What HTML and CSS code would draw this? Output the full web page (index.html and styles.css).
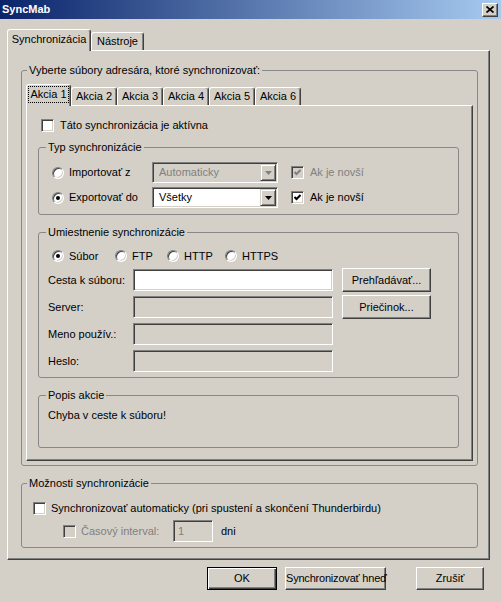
FILE: index.html
```html
<!DOCTYPE html>
<html lang="sk">
<head>
    <meta charset="UTF-8">
    <title>SyncMab</title>
    <link rel="stylesheet" href="styles.css">
</head>
<body>
<div class="window">
    <!-- title bar -->
    <div class="titlebar">
        <span class="title">SyncMab</span>
        <span class="close-btn">
            <svg width="8" height="7" viewBox="0 0 8 7"><path d="M0.5 0.5 L7.5 6.5 M7.5 0.5 L0.5 6.5" stroke="#000" stroke-width="1.7"/></svg>
        </span>
    </div>

    <div class="main">
        <div class="tabs outer-tabs">
            <div class="tab active">Synchronizácia</div>
            <div class="tab">Nástroje</div>
        </div>

        <div class="panel outer-panel">
            <fieldset class="group files-group">
                <legend>Vyberte súbory adresára, ktoré synchronizovať:</legend>

                <div class="tabs inner-tabs">
                    <div class="tab active"><span class="focus">Akcia 1</span></div>
                    <div class="tab">Akcia 2</div>
                    <div class="tab">Akcia 3</div>
                    <div class="tab">Akcia 4</div>
                    <div class="tab">Akcia 5</div>
                    <div class="tab">Akcia 6</div>
                </div>

                <div class="panel inner-panel">
                    <div class="check-row active-row">
                        <span class="check"></span>
                        <span>Táto synchronizácia je aktívna</span>
                    </div>

                    <!-- typ -->
                    <fieldset class="group sub-group type-group">
                        <legend>Typ synchronizácie</legend>
                        <div class="type-row">
                            <span class="radio-label"><span class="radio"></span>Importovať z</span>
                            <div class="combo disabled">
                                <span class="combo-text">Automaticky</span>
                                <span class="drop"><svg width="7" height="4" viewBox="0 0 7 4"><polygon points="0,0 7,0 3.5,4"/></svg></span>
                            </div>
                            <span class="check-label disabled">
                                <span class="check checked"><svg width="7" height="7" viewBox="0 0 7 7"><polyline points="0.5,3 2.5,5 6.5,1" fill="none" stroke-width="2"/></svg></span>
                                Ak je novší
                            </span>
                        </div>
                        <div class="type-row">
                            <span class="radio-label"><span class="radio on"></span>Exportovať do</span>
                            <div class="combo">
                                <span class="combo-text">Všetky</span>
                                <span class="drop"><svg width="7" height="4" viewBox="0 0 7 4"><polygon points="0,0 7,0 3.5,4"/></svg></span>
                            </div>
                            <span class="check-label">
                                <span class="check checked"><svg width="7" height="7" viewBox="0 0 7 7"><polyline points="0.5,3 2.5,5 6.5,1" fill="none" stroke-width="2"/></svg></span>
                                Ak je novší
                            </span>
                        </div>
                    </fieldset>

                    <!-- umiestnenie -->
                    <fieldset class="group sub-group loc-group">
                        <legend>Umiestnenie synchronizácie</legend>
                        <div class="radio-row">
                            <span class="radio-item w-subor"><span class="radio on"></span>Súbor</span>
                            <span class="radio-item w-ftp"><span class="radio"></span>FTP</span>
                            <span class="radio-item w-http"><span class="radio"></span>HTTP</span>
                            <span class="radio-item"><span class="radio"></span>HTTPS</span>
                        </div>
                        <div class="field-row">
                            <span class="field-label">Cesta k súboru:</span>
                            <input class="field" type="text">
                            <button class="btn side-btn">Prehľadávať...</button>
                        </div>
                        <div class="field-row">
                            <span class="field-label">Server:</span>
                            <input class="field" type="text" disabled>
                            <button class="btn side-btn">Priečinok...</button>
                        </div>
                        <div class="field-row">
                            <span class="field-label">Meno použív.:</span>
                            <input class="field" type="text" disabled>
                        </div>
                        <div class="field-row">
                            <span class="field-label">Heslo:</span>
                            <input class="field" type="password" disabled>
                        </div>
                    </fieldset>

                    <!-- popis -->
                    <fieldset class="group sub-group desc-group">
                        <legend>Popis akcie</legend>
                        <div class="desc-text">Chyba v ceste k súboru!</div>
                    </fieldset>
                </div>
            </fieldset>

            <fieldset class="group options-group">
                <legend>Možnosti synchronizácie</legend>
                <div class="check-row auto-row">
                    <span class="check"></span>
                    <span>Synchronizovať automaticky (pri spustení a skončení Thunderbirdu)</span>
                </div>
                <div class="interval-row">
                    <span class="check disabled"></span>
                    <span class="interval-label">Časový interval:</span>
                    <input class="field interval-field" type="text" value="1" disabled>
                    <span class="unit">dni</span>
                </div>
            </fieldset>
        </div>
    </div>

    <!-- dialog buttons -->
    <div class="dialog-buttons">
        <button class="btn default ok-btn">OK</button>
        <button class="btn sync-btn">Synchronizovať hneď</button>
        <button class="btn cancel-btn">Zrušiť</button>
    </div>
</div>
</body>
</html>
```

FILE: styles.css
```css
* {
    box-sizing: border-box;
}

body {
    margin: 0;
    background-color: #d4d0c8;
    font-family: "Liberation Sans", Arial, sans-serif;
    font-size: 11px;
    line-height: 13px;
    color: #000;
}

.window {
    width: 501px;
    height: 602px;
    overflow: hidden;
}

/* title bar */
.titlebar {
    height: 19px;
    background: linear-gradient(to right, #0a246a, #a6caf0);
    display: flex;
    align-items: center;
    justify-content: space-between;
    padding: 0 3px 0 2px;
}

.title {
    color: #fff;
    font-weight: bold;
}

.close-btn {
    width: 16px;
    height: 14px;
    background-color: #d4d0c8;
    border: 1px solid;
    border-color: #fff #404040 #404040 #fff;
    box-shadow: inset -1px -1px #808080;
    display: flex;
    align-items: center;
    justify-content: center;
}

.main {
    padding: 10px 0 0 7px;
}

/* tabs */
.tabs {
    display: flex;
    align-items: flex-end;
    height: 21px;
}

.tab {
    height: 18px;
    border: 1px solid;
    border-bottom: 0;
    border-color: #fff #404040 #404040 #fff;
    box-shadow: inset -1px 0 #808080;
    border-radius: 3px 3px 0 0;
    display: flex;
    align-items: center;
    justify-content: center;
    white-space: nowrap;
}

.tab.active {
    height: 22px;
    margin-bottom: -1px;
    padding-bottom: 2px;
    position: relative;
    z-index: 1;
    background-color: #d4d0c8;
}

.outer-tabs .tab.active { width: 84px; }
.outer-tabs .tab { width: 53px; }

.inner-tabs .tab { width: 46px; }
.inner-tabs .tab.active { width: 45px; }

.focus {
    outline: 1px dotted #000;
    padding: 1px 1px;
}

.panel {
    border: 1px solid;
    border-color: #fff #404040 #404040 #fff;
    box-shadow: inset -1px -1px #808080;
}

.outer-panel {
    width: 483px;
    height: 510px;
    padding: 13px 11px 0 13px;
}

.inner-panel {
    height: 356px;
    padding: 11px 13px 0 11px;
}

/* group boxes */
.group {
    border: 1px solid #888;
    border-radius: 3px;
    margin: 0;
    padding: 0 0 0 5px;
    min-width: 0;
}

.group legend {
    padding: 0 2px;
}

.files-group {
    padding: 7px 4px 4px 4px;
}

.files-group > legend {
    margin-left: 1px;
}

.sub-group {
    margin-top: 11px;
    padding-left: 7px;
}

.type-group {
    margin-top: 8px;
    padding-top: 8px;
    padding-bottom: 6px;
}

.loc-group {
    padding-top: 9px;
    padding-bottom: 5px;
}

.desc-group {
    padding-top: 7px;
    padding-bottom: 25px;
}

.options-group {
    margin-top: 11px;
    padding: 10px 0 5px 5px;
}

/* checkboxes and radios */
.check {
    width: 13px;
    height: 13px;
    flex: none;
    background-color: #fff;
    border: 1px solid;
    border-color: #808080 #fff #fff #808080;
    box-shadow: inset 1px 1px #404040, inset -1px -1px #d4d0c8;
    display: flex;
    align-items: center;
    justify-content: center;
    stroke: #000;
}

.check.disabled,
.disabled .check {
    background-color: #d4d0c8;
    stroke: #808080;
}

.radio {
    width: 12px;
    height: 12px;
    flex: none;
    border-radius: 50%;
    background-color: #fff;
    border: 1px solid;
    border-color: #808080 #fff #fff #808080;
    box-shadow: inset 1px 1px #404040, inset -1px -1px #d4d0c8;
    position: relative;
}

.radio.on::after {
    content: "";
    position: absolute;
    left: 3px;
    top: 3px;
    width: 4px;
    height: 4px;
    border-radius: 50%;
    background-color: #000;
}

.check-row {
    display: flex;
    align-items: center;
    height: 16px;
    gap: 6px;
}

.active-row {
    margin-left: 3px;
}

.auto-row {
    margin-left: 6px;
    gap: 5px;
}

/* typ synchronizacie */
.type-row {
    display: flex;
    align-items: center;
    height: 21px;
    margin-left: 6px;
}

.type-row + .type-row {
    margin-top: 4px;
}

.radio-label {
    width: 100px;
    display: flex;
    align-items: center;
    gap: 5px;
}

.combo {
    width: 126px;
    height: 21px;
    background-color: #fff;
    border: 1px solid;
    border-color: #808080 #fff #fff #808080;
    box-shadow: inset 1px 1px #404040, inset -1px -1px #d4d0c8;
    padding: 1px;
    display: flex;
    align-items: center;
}

.combo-text {
    padding-left: 5px;
    flex: 1;
}

.combo.disabled {
    background-color: #d4d0c8;
    color: #808080;
}

.drop {
    width: 16px;
    height: 17px;
    background-color: #d4d0c8;
    border: 1px solid;
    border-color: #d4d0c8 #404040 #404040 #d4d0c8;
    box-shadow: inset 1px 1px #fff, inset -1px -1px #808080;
    display: flex;
    align-items: center;
    justify-content: center;
    fill: #000;
}

.combo.disabled .drop {
    fill: #808080;
}

.check-label {
    margin-left: 13px;
    display: flex;
    align-items: center;
    gap: 6px;
}

.disabled {
    color: #808080;
}

/* umiestnenie */
.radio-row {
    display: flex;
    align-items: center;
    height: 16px;
    margin-left: 6px;
}

.radio-item {
    display: flex;
    align-items: center;
    gap: 5px;
}

.w-subor { width: 63px; }
.w-ftp { width: 52px; }
.w-http { width: 58px; }

.field-row {
    display: flex;
    align-items: center;
    height: 22px;
    margin-top: 5px;
    margin-left: 2px;
}

.field-label {
    width: 85px;
}

.field {
    width: 200px;
    height: 22px;
    margin: 0;
    padding: 0 4px;
    font: inherit;
    color: #000;
    background-color: #fff;
    border: 1px solid;
    border-color: #808080 #fff #fff #808080;
    box-shadow: inset 1px 1px #404040, inset -1px -1px #d4d0c8;
    outline: none;
}

.field:disabled {
    background-color: #d4d0c8;
    color: #808080;
}

.btn {
    height: 23px;
    margin: 0;
    padding: 0;
    font: inherit;
    color: #000;
    white-space: nowrap;
    background-color: #d4d0c8;
    border: 1px solid;
    border-color: #fff #404040 #404040 #fff;
    box-shadow: inset -1px -1px #808080;
}

.side-btn {
    width: 89px;
    height: 24px;
    margin-left: 9px;
}

.desc-text {
    margin-left: 2px;
}

/* moznosti */
.interval-row {
    display: flex;
    align-items: center;
    height: 22px;
    margin-top: 4px;
    margin-left: 36px;
    gap: 5px;
}

.interval-label {
    width: 87px;
    color: #808080;
}

.interval-field {
    width: 40px;
}

.unit {
    margin-left: 3px;
}

/* dialog buttons */
.dialog-buttons {
    display: flex;
    justify-content: flex-end;
    margin-top: 7px;
    padding-right: 17px;
}

.btn.default {
    border-color: #000;
    box-shadow: inset 1px 1px #fff, inset -1px -1px #404040, inset -2px -2px #808080;
}

.ok-btn { width: 70px; }
.sync-btn { width: 101px; margin-left: 8px; letter-spacing: -0.2px; }
.cancel-btn { width: 68px; margin-left: 30px; }
```
